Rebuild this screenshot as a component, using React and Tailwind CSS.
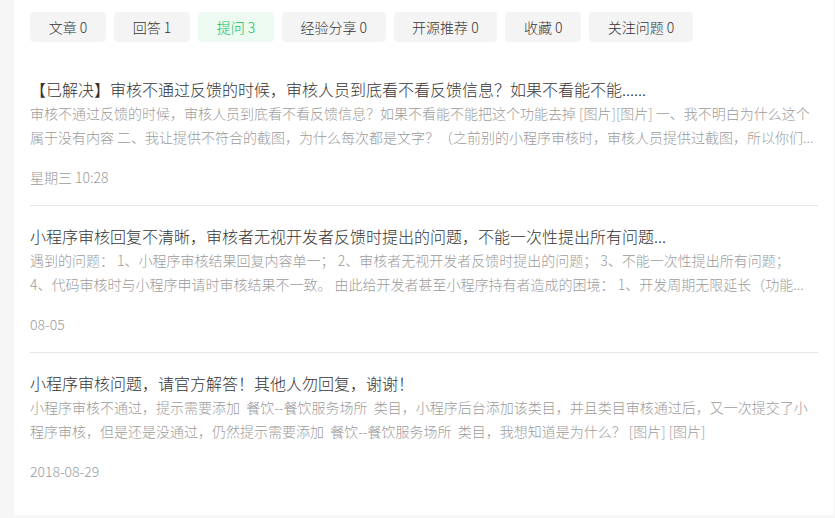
const tabs = [
  { label: '文章', count: 0 },
  { label: '回答', count: 1 },
  { label: '提问', count: 3, active: true },
  { label: '经验分享', count: 0 },
  { label: '开源推荐', count: 0 },
  { label: '收藏', count: 0 },
  { label: '关注问题', count: 0 },
]

const questions = [
  {
    title: '【已解决】审核不通过反馈的时候，审核人员到底看不看反馈信息？如果不看能不能......',
    desc: '审核不通过反馈的时候，审核人员到底看不看反馈信息？如果不看能不能把这个功能去掉 [图片][图片] 一、我不明白为什么这个属于没有内容 二、我让提供不符合的截图，为什么每次都是文字？（之前别的小程序审核时，审核人员提供过截图，所以你们...',
    date: '星期三 10:28',
  },
  {
    title: '小程序审核回复不清晰，审核者无视开发者反馈时提出的问题，不能一次性提出所有问题...',
    desc: '遇到的问题： 1、小程序审核结果回复内容单一； 2、审核者无视开发者反馈时提出的问题； 3、不能一次性提出所有问题；\n4、代码审核时与小程序申请时审核结果不一致。 由此给开发者甚至小程序持有者造成的困境： 1、开发周期无限延长（功能...',
    date: '08-05',
  },
  {
    title: '小程序审核问题，请官方解答！其他人勿回复，谢谢！',
    desc: '小程序审核不通过，提示需要添加  餐饮--餐饮服务场所  类目，小程序后台添加该类目，并且类目审核通过后，又一次提交了小程序审核，但是还是没通过，仍然提示需要添加  餐饮--餐饮服务场所  类目，我想知道是为什么？ [图片] [图片]',
    date: '2018-08-29',
  },
]

export default function App() {
  return (
    <div
      className="min-h-[518px] bg-[#f6f6f6] pl-[14px] pr-px pb-[3px] font-light"
      style={{ fontFamily: '"Noto Sans CJK SC", "Noto Sans", sans-serif' }}
    >
      <div className="bg-white px-4 pt-3 pb-4">
        <div className="flex gap-2">
          {tabs.map((t) => (
            <div
              key={t.label}
              className={
                'h-[30px] min-w-[76px] flex items-center justify-center px-[18.5px] rounded text-[14px] ' +
                (t.active ? 'bg-[#edfaf2] text-[#07c160]' : 'bg-[#f4f4f4] text-[#353535]')
              }
            >
              {t.label} {t.count}
            </div>
          ))}
        </div>

        <div className="mt-[17px]">
          {questions.map((q, i) => (
            <div
              key={i}
              className={'pt-[18px] pb-4 ' + (i < questions.length - 1 ? 'border-b border-[#e7e7e7]' : '')}
            >
              <div className="text-[16px] leading-6 text-[#353535] truncate">{q.title}</div>
              <div className="text-[14px] leading-6 text-[#9b9b9b] line-clamp-2 whitespace-pre-wrap">{q.desc}</div>
              <div className="mt-4 text-[14px] leading-6 text-[#9b9b9b]">{q.date}</div>
            </div>
          ))}
        </div>
      </div>
    </div>
  )
}
